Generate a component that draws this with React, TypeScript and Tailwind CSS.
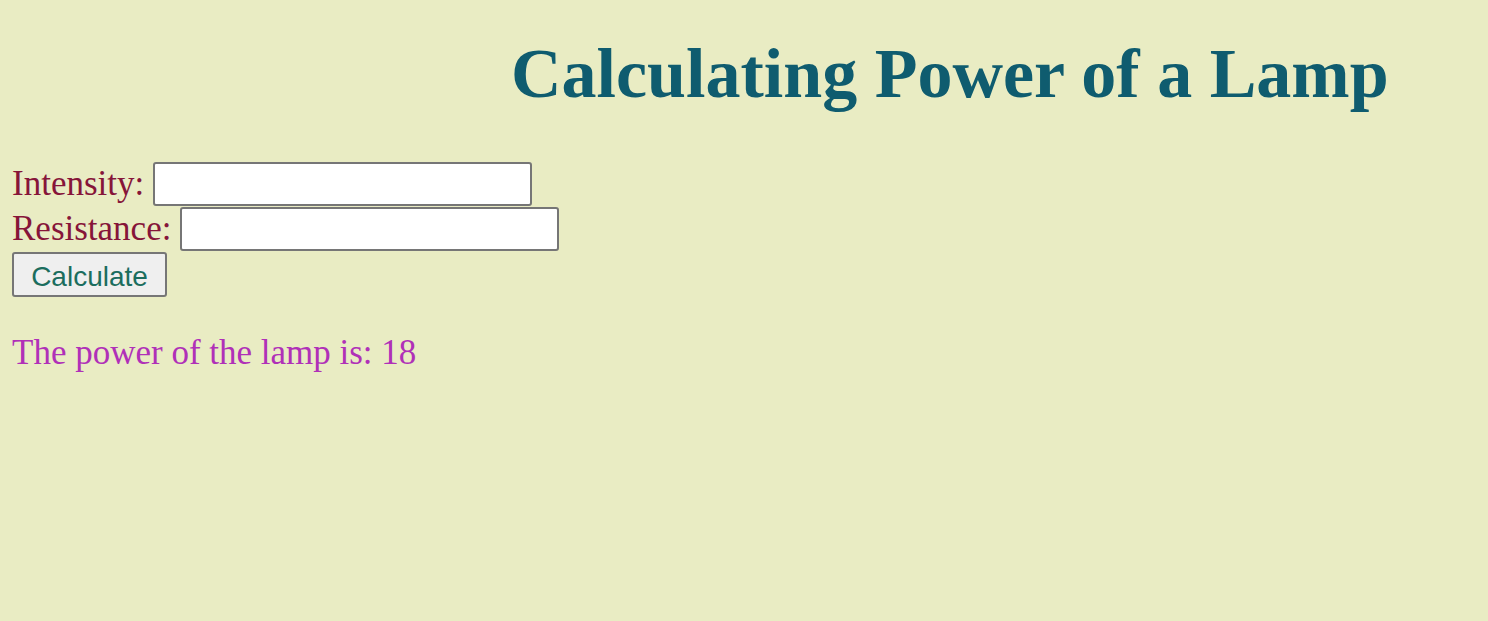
export default function App() {
  return (
    <div className="min-h-[621px] bg-[#e9ecc3] px-[12px] font-['Liberation_Serif',serif]">
      {/* Heading */}
      <h1 className="pl-[499px] pt-[31px] text-[70px] font-bold leading-[86px] text-[#0f5c6f]">
        Calculating Power of a Lamp
      </h1>

      {/* Form */}
      <form className="mt-[44px] flex flex-col items-start text-[35px] leading-[45px] text-[#861539]">
        <label className="flex items-center gap-[9px]">
          Intensity:
          <input
            type="text"
            className="h-[44px] w-[379px] rounded-[3px] border-2 border-[#767676] bg-white"
          />
        </label>
        <label className="flex items-center gap-[9px]">
          Resistance:
          <input
            type="text"
            className="h-[44px] w-[379px] rounded-[3px] border-2 border-[#767676] bg-white"
          />
        </label>
        <button
          type="button"
          className="mt-[1px] h-[45px] w-[155px] rounded-[3px] border-2 border-[#767676] bg-[#efefef] font-['Liberation_Sans',sans-serif] text-[28px] text-[#1b6d5e]"
        >
          Calculate
        </button>
      </form>

      {/* Result */}
      <p className="mt-[35px] text-[35px] leading-[42px] text-[#b030b8]">
        The power of the lamp is: 18
      </p>
    </div>
  );
}
